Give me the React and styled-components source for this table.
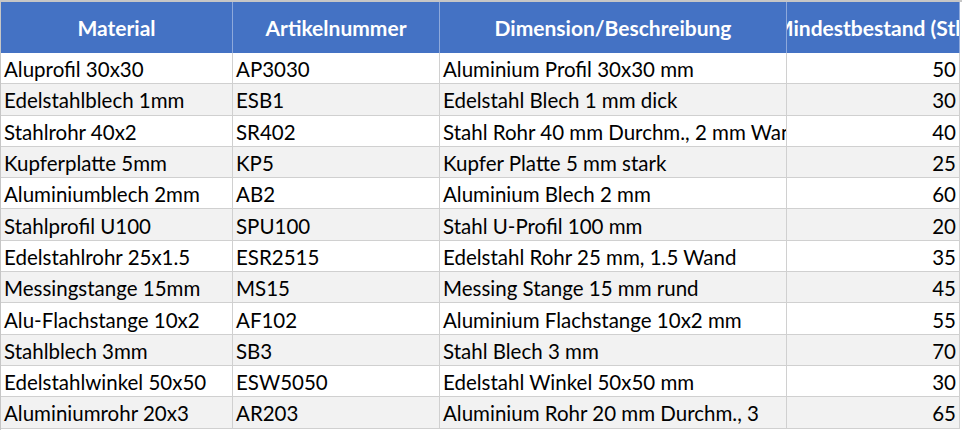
import React from 'react';
import styled, { createGlobalStyle } from 'styled-components';

const GlobalStyle = createGlobalStyle`
  html, body {
    margin: 0;
    padding: 0;
    background: #FFF;
  }
`;

const Sheet = styled.div`
  width: 962px;
  height: 430px;
  overflow: hidden;
  box-sizing: border-box;
  border-top: 2px solid #C6C6C6;
  border-left: 1px solid #C6C6C6;
  font-family: Lato, 'Open Sans', sans-serif;
`;

const Grid = styled.div`
  display: grid;
  grid-template-columns: 232px 207px 347px 173px;
`;

const HeadCell = styled.div`
  display: flex;
  justify-content: center;
  align-items: center;
  height: 51px;
  overflow: hidden;
  white-space: nowrap;
  box-sizing: border-box;
  border-right: 1px solid #8EA9DB;
  background: #4472C4;
  color: #FFF;
  font: 700 21px Lato, 'Open Sans', sans-serif;
`;

const Cell = styled.div`
  display: flex;
  align-items: center;
  justify-content: ${props => props.numeric ? 'flex-end' : 'flex-start'};
  height: 31.3px;
  padding: 2px 3px 0 3px;
  overflow: hidden;
  white-space: nowrap;
  box-sizing: border-box;
  border-right: 1px solid #D0D0D0;
  border-bottom: 1px solid #D0D0D0;
  background: ${props => props.striped ? '#F2F2F2' : '#FFF'};
  color: #000;
  font: 400 20.5px Lato, 'Open Sans', sans-serif;
`;

const columns = ['Material', 'Artikelnummer', 'Dimension/Beschreibung', 'Mindestbestand (Stk)'];

const rows = [
  ['Aluprofil 30x30', 'AP3030', 'Aluminium Profil 30x30 mm', 50],
  ['Edelstahlblech 1mm', 'ESB1', 'Edelstahl Blech 1 mm dick', 30],
  ['Stahlrohr 40x2', 'SR402', 'Stahl Rohr 40 mm Durchm., 2 mm Wand', 40],
  ['Kupferplatte 5mm', 'KP5', 'Kupfer Platte 5 mm stark', 25],
  ['Aluminiumblech 2mm', 'AB2', 'Aluminium Blech 2 mm', 60],
  ['Stahlprofil U100', 'SPU100', 'Stahl U-Profil 100 mm', 20],
  ['Edelstahlrohr 25x1.5', 'ESR2515', 'Edelstahl Rohr 25 mm, 1.5 Wand', 35],
  ['Messingstange 15mm', 'MS15', 'Messing Stange 15 mm rund', 45],
  ['Alu-Flachstange 10x2', 'AF102', 'Aluminium Flachstange 10x2 mm', 55],
  ['Stahlblech 3mm', 'SB3', 'Stahl Blech 3 mm', 70],
  ['Edelstahlwinkel 50x50', 'ESW5050', 'Edelstahl Winkel 50x50 mm', 30],
  ['Aluminiumrohr 20x3', 'AR203', 'Aluminium Rohr 20 mm Durchm., 3', 65],
];

const App = () => (
  <>
    <GlobalStyle />
    <Sheet>
      <Grid>
        {columns.map(col => (
          <HeadCell key={col}>
            <span>{col}</span>
          </HeadCell>
        ))}
        {rows.map((row, r) =>
          row.map((value, c) => (
            <Cell
              key={`${r}-${c}`}
              striped={r % 2 === 1}
              numeric={typeof value === 'number'}
            >
              {value}
            </Cell>
          ))
        )}
      </Grid>
    </Sheet>
  </>
);

export default App;
